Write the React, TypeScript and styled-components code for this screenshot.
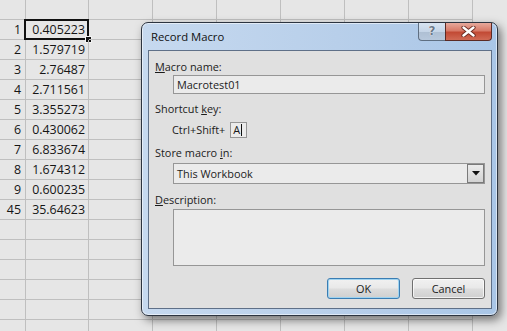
import React from "react";
import styled, { createGlobalStyle } from "styled-components";

const GlobalStyle = createGlobalStyle`
  html, body {
    margin: 0;
    padding: 0;
    background: #e6e6e6;
    overflow: hidden;
  }
`;

const rows: [string, string][] = [
  ["", ""],
  ["1", "0.405223"],
  ["2", "1.579719"],
  ["3", "2.76487"],
  ["4", "2.711561"],
  ["5", "3.355273"],
  ["6", "0.430062"],
  ["7", "6.833674"],
  ["8", "1.674312"],
  ["9", "0.600235"],
  ["45", "35.64623"],
  ["", ""],
  ["", ""],
  ["", ""],
  ["", ""],
  ["", ""],
  ["", ""],
];

const EMPTY_COLS = 6;

const App = () => {
  return (
    <Page>
      <GlobalStyle />
      <Sheet>
        {rows.map(([n, v], i) => (
          <React.Fragment key={i}>
            <Cell $first>{n}</Cell>
            <Cell>
              {v}
              {i === 1 && (
                <Selection>
                  <FillHandle />
                </Selection>
              )}
            </Cell>
            {Array.from({ length: EMPTY_COLS }).map((_, j) => (
              <Cell key={j} />
            ))}
          </React.Fragment>
        ))}
      </Sheet>

      <Dialog>
        <TitleBar>
          <Title>Record Macro</Title>
          <Caption>
            <HelpButton>?</HelpButton>
            <CloseButton>
              <svg width="15" height="11" viewBox="0 0 15 11">
                <path
                  d="M2.5 1.5 L12.5 9.5 M12.5 1.5 L2.5 9.5"
                  stroke="#6a2a20"
                  strokeWidth="4.2"
                  strokeLinecap="round"
                />
                <path
                  d="M2.5 1.5 L12.5 9.5 M12.5 1.5 L2.5 9.5"
                  stroke="#ffffff"
                  strokeWidth="2.4"
                  strokeLinecap="round"
                />
              </svg>
            </CloseButton>
          </Caption>
        </TitleBar>

        <Client>
          <Label>
            <u>M</u>acro name:
          </Label>
          <TextBox $mt={1}>Macrotest01</TextBox>

          <Label $mt={8}>
            Shortcut <u>k</u>ey:
          </Label>
          <ShortcutRow>
            <span>Ctrl+Shift+</span>
            <KeyBox>
              A<Caret />
            </KeyBox>
          </ShortcutRow>

          <Label $mt={8}>
            Store macro <u>i</u>n:
          </Label>
          <Select>
            <span>This Workbook</span>
            <DropButton>
              <svg width="8" height="5" viewBox="0 0 8 5">
                <path d="M0 0 H8 L4 4.5 Z" fill="#111" />
              </svg>
            </DropButton>
          </Select>

          <Label $mt={9}>
            <u>D</u>escription:
          </Label>
          <TextArea />

          <ButtonRow>
            <PushButton $focused>OK</PushButton>
            <PushButton>Cancel</PushButton>
          </ButtonRow>
        </Client>
      </Dialog>
    </Page>
  );
};

const Page = styled.div`
  position: relative;
  width: 507px;
  height: 331px;
  overflow: hidden;
  background: #e6e6e6;
`;

const Sheet = styled.div`
  display: grid;
  grid-template-columns: 26px 63px repeat(6, 64px);
  grid-auto-rows: 20px;
`;

const Cell = styled.div<{ $first?: boolean }>`
  position: relative;
  box-sizing: border-box;
  border-right: 1px solid #bfbfbf;
  border-bottom: 1px solid #bfbfbf;
  padding-right: ${(p) => (p.$first ? 4 : 3)}px;
  text-align: right;
  font-family: "Open Sans", sans-serif;
  font-size: 12.4px;
  line-height: 19px;
  color: #151515;
  white-space: nowrap;
`;

const Selection = styled.div`
  position: absolute;
  top: -1px;
  left: -2px;
  right: -1px;
  bottom: -1px;
  border: 2px solid #111;
`;

const FillHandle = styled.div`
  position: absolute;
  right: -5px;
  bottom: -5px;
  width: 5px;
  height: 5px;
  background: #111;
  border: 1px solid #f4f4f4;
`;

const Dialog = styled.div`
  position: absolute;
  left: 141px;
  top: 22px;
  width: 357px;
  height: 294px;
  box-sizing: border-box;
  display: flex;
  flex-direction: column;
  border: 1px solid #2c3440;
  border-radius: 7px;
  background: linear-gradient(90deg, #c6d9ef 0%, #b8cfea 55%, #a9c6e7 100%);
  box-shadow: inset 0 0 0 1px rgba(255, 255, 255, 0.55),
    3px 4px 10px rgba(0, 0, 0, 0.5);
  padding: 0 5px 6px 6px;
  font-family: "Open Sans", sans-serif;
  color: #1b1b1b;
`;

const TitleBar = styled.div`
  display: flex;
  align-items: flex-start;
  height: 27px;
  flex-shrink: 0;
`;

const Title = styled.div`
  flex: 1;
  padding: 7px 0 0 3px;
  font-size: 11.3px;
  line-height: 14px;
  color: #111;
`;

const Caption = styled.div`
  display: flex;
`;

const HelpButton = styled.div`
  width: 27px;
  height: 18px;
  box-sizing: border-box;
  border: 1px solid #5f6f82;
  border-top: none;
  border-right: none;
  border-radius: 0 0 0 4px;
  background: linear-gradient(#d8e4f1 0%, #c5d5e7 50%, #aebfd3 51%, #b7c8dc 100%);
  text-align: center;
  font-family: "DejaVu Sans", sans-serif;
  font-weight: bold;
  font-size: 12px;
  line-height: 17px;
  color: #6b7989;
  text-shadow: 0 0 1px #fff, 0 0 1px #fff;
`;

const CloseButton = styled.div`
  width: 47px;
  height: 18px;
  box-sizing: border-box;
  display: flex;
  align-items: center;
  justify-content: center;
  border: 1px solid #5b2a24;
  border-top: none;
  border-radius: 0 0 4px 0;
  background: linear-gradient(#e6a99c 0%, #d77a68 45%, #c24a35 55%, #d06a55 100%);
`;

const Client = styled.div`
  flex: 1;
  display: flex;
  flex-direction: column;
  align-items: flex-start;
  box-sizing: border-box;
  border: 1px solid #5f7088;
  background: #e0e0e0;
  padding: 9px 5px 0 6px;
  font-size: 10.9px;
`;

const Label = styled.div<{ $mt?: number }>`
  margin-top: ${(p) => p.$mt ?? 0}px;
  line-height: 14px;
  height: 14px;
  u {
    text-decoration-thickness: 1px;
    text-underline-offset: 1px;
  }
`;

const fieldBox = `
  box-sizing: border-box;
  border: 1px solid #969696;
  background: #ebebeb;
`;

const TextBox = styled.div<{ $mt?: number }>`
  ${fieldBox}
  margin: ${(p) => p.$mt ?? 0}px 0 0 18px;
  width: 312px;
  height: 19px;
  padding-left: 3px;
  line-height: 17px;
`;

const ShortcutRow = styled.div`
  display: flex;
  align-items: center;
  gap: 5px;
  margin: 6px 0 0 17px;
  height: 16px;
  line-height: 16px;
`;

const KeyBox = styled.div`
  ${fieldBox}
  display: flex;
  align-items: center;
  width: 17px;
  height: 16px;
  padding-left: 2px;
  line-height: 14px;
`;

const Caret = styled.span`
  display: inline-block;
  width: 1px;
  height: 12px;
  margin-left: 1px;
  background: #111;
`;

const Select = styled.div`
  ${fieldBox}
  display: flex;
  align-items: center;
  justify-content: space-between;
  margin: 3px 0 0 18px;
  width: 312px;
  height: 21px;
  padding-left: 3px;
  line-height: 19px;
`;

const DropButton = styled.div`
  box-sizing: border-box;
  width: 17px;
  height: 19px;
  display: flex;
  align-items: center;
  justify-content: center;
  border: 1px solid #7a7a7a;
  background: linear-gradient(#ececec, #d2d2d2);
`;

const TextArea = styled.div`
  ${fieldBox}
  margin: 2px 0 0 18px;
  width: 312px;
  height: 57px;
`;

const ButtonRow = styled.div`
  align-self: stretch;
  display: flex;
  justify-content: flex-end;
  gap: 12px;
  margin-top: 12px;
  padding-right: 1px;
`;

const PushButton = styled.div<{ $focused?: boolean }>`
  box-sizing: border-box;
  width: 73px;
  height: 21px;
  border: 1px solid ${(p) => (p.$focused ? "#3a7db3" : "#707070")};
  border-radius: 3px;
  background: linear-gradient(#f1f1f1 0%, #e9e9e9 45%, #dcdcdc 55%, #cfcfcf 100%);
  box-shadow: inset 0 0 0 1px
    ${(p) => (p.$focused ? "#9fd3f0" : "rgba(255,255,255,0.7)")};
  text-align: center;
  line-height: 19px;
  font-size: 10.9px;
`;

export default App;
